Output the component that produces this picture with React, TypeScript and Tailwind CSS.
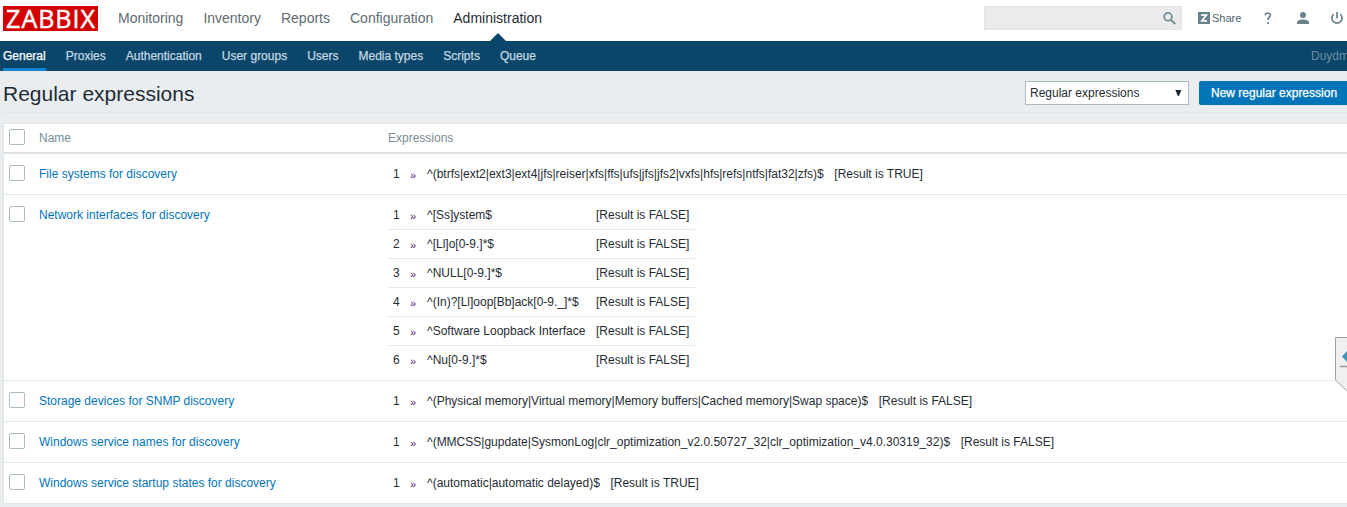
import React from "react";

type Expression = { text: string; result: string };
type Row = { name: string; expressions: Expression[] };

const T = "[Result is TRUE]";
const F = "[Result is FALSE]";

const rows: Row[] = [
  {
    name: "File systems for discovery",
    expressions: [
      { text: "^(btrfs|ext2|ext3|ext4|jfs|reiser|xfs|ffs|ufs|jfs|jfs2|vxfs|hfs|refs|ntfs|fat32|zfs)$", result: T },
    ],
  },
  {
    name: "Network interfaces for discovery",
    expressions: [
      { text: "^[Ss]ystem$", result: F },
      { text: "^[Ll]o[0-9.]*$", result: F },
      { text: "^NULL[0-9.]*$", result: F },
      { text: "^(In)?[Ll]oop[Bb]ack[0-9._]*$", result: F },
      { text: "^Software Loopback Interface", result: F },
      { text: "^Nu[0-9.]*$", result: F },
    ],
  },
  {
    name: "Storage devices for SNMP discovery",
    expressions: [
      { text: "^(Physical memory|Virtual memory|Memory buffers|Cached memory|Swap space)$", result: F },
    ],
  },
  {
    name: "Windows service names for discovery",
    expressions: [
      { text: "^(MMCSS|gupdate|SysmonLog|clr_optimization_v2.0.50727_32|clr_optimization_v4.0.30319_32)$", result: F },
    ],
  },
  {
    name: "Windows service startup states for discovery",
    expressions: [{ text: "^(automatic|automatic delayed)$", result: T }],
  },
];

const mainNav = ["Monitoring", "Inventory", "Reports", "Configuration", "Administration"];
const subNav = ["General", "Proxies", "Authentication", "User groups", "Users", "Media types", "Scripts", "Queue"];

function Checkbox() {
  return <span className="block h-4 w-4 rounded-[2px] border border-[#acbbc2] bg-white" />;
}

function TopBar() {
  return (
    <header className="flex h-[41px] items-start bg-white">
      <div className="ml-[3px] mt-[6px] flex h-[25px] w-[95px] items-center justify-center bg-[#d40000] pl-px font-['Open_Sans',sans-serif] text-[25px] leading-[25px] tracking-[1px] text-white [-webkit-text-stroke:0.5px]">
        ZABBIX
      </div>
      <nav className="ml-[20px] flex gap-[20px] text-[14px] leading-[36px]">
        {mainNav.map((item) => (
          <a
            key={item}
            className={
              item === "Administration"
                ? "relative h-[41px] text-[#1f2c33]"
                : "h-[41px] text-[#5d6b73]"
            }
          >
            {item}
            {item === "Administration" && (
              <svg className="absolute bottom-0 left-[37px]" width="16" height="8" viewBox="0 0 16 8">
                <path d="M0 8L8 0l8 8z" fill="#0a466a" />
              </svg>
            )}
          </a>
        ))}
      </nav>
      <div className="ml-auto flex h-9 shrink-0 items-center">
        <div className="flex h-6 w-[198px] items-center justify-end border border-[#e2e4e5] bg-[#ebebeb] pr-[5px]">
          <svg width="13" height="13" viewBox="0 0 13 13" fill="none" stroke="#768d99">
            <circle cx="5" cy="4.8" r="3.9" strokeWidth="1.7" />
            <path d="M7.8 7.6l4.4 4.4" strokeWidth="2" />
          </svg>
        </div>
        <span className="ml-4 flex h-3 w-3 items-center justify-center bg-[#69808d]">
          <svg width="12" height="12" viewBox="0 0 12 12" fill="none" stroke="#fff" strokeWidth="1.7">
            <path d="M3 3.100h5.400L3.800 8.900H9" />
          </svg>
        </span>
        <span className="ml-[2px] w-[30px] text-[11px] text-[#4f5f69]">Share</span>
        <svg className="ml-[22px]" width="8" height="12" viewBox="0 0 8 12" fill="none" stroke="#69808d" strokeWidth="1.7">
          <path d="M1.200 3.300C1.200 1.800 2.300 1 3.800 1s2.600.8 2.600 2.200C6.400 5 4 5.100 4 7.900M4 9.900v2" />
        </svg>
        <svg className="ml-[25px]" width="12" height="12" viewBox="0 0 12 12" fill="#69808d">
          <circle cx="6" cy="3" r="3" />
          <path d="M0 12V10.600C0 8.500 3 7.600 6 7.600s6 .9 6 3V12z" />
        </svg>
        <svg className="ml-[22px] mr-1" width="12" height="12" viewBox="0 0 12 12" fill="none" stroke="#69808d" strokeWidth="1.700">
          <path d="M6 0v6.500M2.700 2.100a5.100 5.100 0 1 0 6.600 0" />
        </svg>
      </div>
    </header>
  );
}

function SubBar() {
  return (
    <nav className="flex h-[30px] gap-[20px] overflow-hidden bg-[#0a466a] pl-[3px] text-[12px] leading-[30px] text-[#c5d6e0] [-webkit-text-stroke:0.25px]">
      {subNav.map((item) => (
        <a
          key={item}
          className={
            item === "General"
              ? "h-[30px] shrink-0 whitespace-nowrap border-b-[3px] border-[#1284d1] text-white"
              : "h-[30px] shrink-0 whitespace-nowrap"
          }
        >
          {item}
        </a>
      ))}
      <span className="ml-auto w-[36px] shrink-0 text-[#6d8fa3] [-webkit-text-stroke:0]">Duydm</span>
    </nav>
  );
}

function TitleBar() {
  return (
    <div className="ml-[3px] flex h-[42px] items-start border-b border-[#dfe4e7]">
      <h1 className="text-[21px] leading-[46px]">Regular expressions</h1>
      <div className="ml-auto mt-[10px] flex gap-[10px]">
        <div className="flex h-6 w-[164px] items-center justify-between border border-[#acbbc2] bg-white pl-[4px] pr-[6px] text-[12px] leading-[22px]">
          <span>Regular expressions</span>
          <svg width="7" height="7" viewBox="0 0 7 7" fill="#1f2c33">
            <path d="M.3 0h6.200L3.900 6h-1z" />
          </svg>
        </div>
        <button className="h-6 w-[148px] whitespace-nowrap rounded-l-[2px] bg-[#0275b8] pl-[12px] text-left text-[12px] leading-6 text-white [-webkit-text-stroke:0.25px]">
          New regular expression
        </button>
      </div>
    </div>
  );
}

function ExpressionList({ items }: { items: Expression[] }) {
  return (
    <div className="grid grid-cols-[39px_auto_auto]">
      {items.map((e, i) => {
        const cell =
          i < items.length - 1
            ? "h-[29px] whitespace-nowrap border-b border-[#e5e9ec] leading-[28px]"
            : "h-7 whitespace-nowrap leading-[28px]";
        return (
          <React.Fragment key={e.text}>
            <div className={`${cell} flex`}>
              <span className="ml-[5px] w-[17px]">{i + 1}</span>
              <span className="pt-px text-[11px] text-[#55205f]">»</span>
            </div>
            <div className={`${cell} pr-[10.6px]`}>{e.text}</div>
            <div className={`${cell} pr-[6px]`}>{e.result}</div>
          </React.Fragment>
        );
      })}
    </div>
  );
}

export default function App() {
  return (
    <div className="h-[507px] w-full overflow-hidden bg-[#e9edf0] font-['Liberation_Sans',Arial,sans-serif] text-[12px] text-[#1f2c33]">
      <TopBar />
      <SubBar />
      <TitleBar />
      <main className="relative ml-[3px] mt-[10px] border-y border-l border-[#dfe4e7] bg-white">
        <div className="flex h-[30px] border-b-2 border-[#dce2e5] leading-[28px] text-[#768d99]">
          <div className="w-[35px] pl-[5px] pt-[5px]"><Checkbox /></div>
          <div className="w-[349px]">Name</div>
          <div>Expressions</div>
        </div>
        {rows.map((row, i) => (
          <div key={row.name} className={i < rows.length - 1 ? "flex border-b border-[#e5e9ec] py-[6px]" : "flex py-[6px]"}>
            <div className="w-[35px] shrink-0 pl-[5px] pt-[5px]"><Checkbox /></div>
            <a className="w-[349px] shrink-0 leading-[28px] text-[#0275b8]">{row.name}</a>
            <ExpressionList items={row.expressions} />
          </div>
        ))}
        <svg className="absolute right-0 top-[213px]" width="12" height="55" viewBox="0 0 12 55">
          <path d="M.5.500H14V56L.5 43z" fill="#f0f0f0" stroke="#a0a0a0" />
          <path d="M7 19.500l5-5.500v11z" fill="#3d93bd" />
          <path d="M5 29.500h7" stroke="#999" strokeWidth="1.500" />
        </svg>
      </main>
    </div>
  );
}
